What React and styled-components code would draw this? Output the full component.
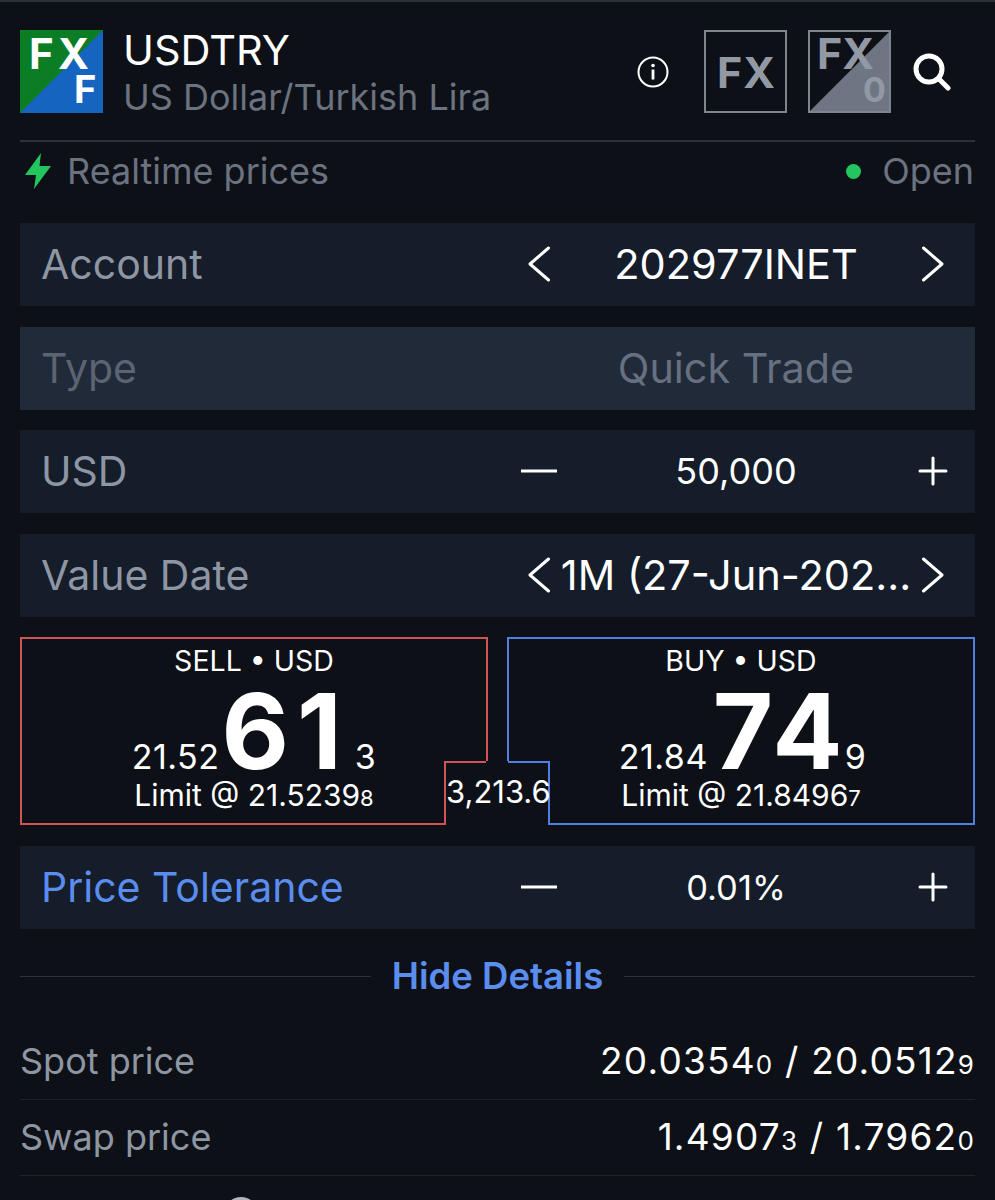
import React from "react";
import styled, { createGlobalStyle } from "styled-components";

const Global = createGlobalStyle`
  html, body { margin: 0; padding: 0; background: #0d1017; height: 1200px; overflow: hidden; }
  * { box-sizing: border-box; }
`;
const Page = styled.div`
  width: 995px; height: 1200px; overflow: hidden; background: #0d1017;
  border-top: 2px solid #2a303c; padding: 28px 20px 0;
  font-family: Inter, "Liberation Sans", sans-serif; color: #fff;
  display: flex; flex-direction: column;
  & > * { flex: none; }
`;
const Header = styled.header`
  display: flex; align-items: center; height: 83px;
`;
const TitleBlock = styled.div`
  margin: 3px 0 0 20px; flex: 1; display: flex; flex-direction: column; gap: 5px;
`;
const Title = styled.div`font-size: 41.5px; line-height: 42px; color: #fff;`;
const Subtitle = styled.div`font-size: 36px; line-height: 42px; color: #6b7280;`;
const Tools = styled.div`display: flex; align-items: center;`;
const InfoWrap = styled.div`margin-right: 35px; display: flex;`;
const SearchWrap = styled.div`margin-left: 22px; margin-right: 24px; display: flex;`;
const MarketBadge = styled.svg`margin-left: ${p => p.$gap || 0}px; display: block;`;
const Divider = styled.div`height: 2px; background: #2a303c; margin-top: 27px;`;
const StatusRow = styled.div`
  display: flex; align-items: center; justify-content: space-between; height: 58px;
`;
const StatusLeft = styled.div`display: flex; align-items: center; gap: 16px; font-size: 36px; color: #6b7280; margin-left: 5px;`;
const StatusRight = styled.div`display: flex; align-items: center; gap: 21px; font-size: 36px; color: #6b7280; margin-right: 1px;`;
const Dot = styled.span`width: 15px; height: 15px; border-radius: 50%; background: #22c55e;`;
const Rows = styled.div`display: flex; flex-direction: column; gap: 20.7px; margin-top: 23px;`;
const Row = styled.div`
  height: 83px; background: ${p => p.$disabled ? "#212a38" : "#151c2a"};
  display: grid; grid-template-columns: 468px 60px minmax(0, 1fr) 60px 12px; align-items: center;
  padding: 0 0 1px 21px;
`;
const RowLabel = styled.div`
  font-size: 41px; color: ${p => p.$accent ? "#5b8def" : p.$disabled ? "#5a6472" : "#8f96a3"}; white-space: nowrap;
`;
const RowValue = styled.div`
  font-size: ${p => p.$size || 36}px; display: flex; justify-content: center; white-space: nowrap;
  color: ${p => p.$disabled ? "#667080" : "#fff"};
`;
const Stepper = styled.div`display: flex; justify-content: center; align-items: center; position: relative; z-index: 1;`;
const SpanValue = styled(RowValue)`grid-column: 2 / 5;`;
const Trade = styled.div`
  position: relative; display: grid; grid-template-columns: 468px 468px; justify-content: space-between;
  height: 188px; margin-top: 20px; margin-bottom: 21px;
`;
const TradeCard = styled.div`
  border: 2px solid ${p => p.$color}; display: flex; flex-direction: column; align-items: center;
  padding-top: 6px;
`;
const CardTitle = styled.div`font-size: 28.5px; line-height: 32px;`;
const PriceLine = styled.div`
  display: flex; align-items: baseline; height: 102px; padding-top: 6px; margin-left: ${p => p.$shift || 0}px;
`;
const Small = styled.span`font-size: 34px; line-height: 1; letter-spacing: 0.5px;`;
const Big = styled.span`font-size: 104px; line-height: 96px; font-weight: 700; letter-spacing: ${p => p.$ls}px; margin: 0 ${p => p.$mr}px 0 ${p => p.$ml}px;`;
const LimitLine = styled.div`font-size: 30px; line-height: 32px;`;
const Tiny = styled.span`font-size: ${p => p.$size || 22}px;`;
const Spread = styled.div`
  position: absolute; left: 424px; top: 124px; width: 106px; height: 64px; background: #0d1017;
  border-left: 2px solid #cf5454; border-right: 2px solid #4f7fe0;
  font-size: 31px; text-align: center; line-height: 62px; white-space: nowrap;
  &::before, &::after { content: ""; position: absolute; top: 0; height: 2px; width: 42px; }
  &::before { left: -2px; background: #cf5454; }
  &::after { right: -2px; background: #4f7fe0; }
`;
const DetailsHead = styled.div`
  display: flex; align-items: center; gap: 21px; margin-top: 21px; height: 52px;
  &::before, &::after { content: ""; flex: 1; height: 1px; background: #2a303c; }
`;
const HideLink = styled.div`font-size: 36.5px; font-weight: 600; color: #5b8def;`;
const Details = styled.div`display: flex; flex-direction: column; margin-top: 22px;`;
const DetailRow = styled.div`
  display: flex; justify-content: space-between; align-items: center; height: 76px; padding-bottom: 2px;
  border-bottom: 1px solid #1c2230; flex: none;
`;
const DetailLabel = styled.div`
  font-size: 36px; color: ${p => p.$accent ? "#5b8def" : "#8f96a3"}; display: flex; align-items: center; gap: 24px;
  margin-top: ${p => p.$lower || 0}px;
`;
const DetailValue = styled.div`
  font-size: 37px; color: #fff; letter-spacing: 1.2px; margin-top: ${p => p.$lower || 0}px;
`;
const Hint = styled.span`
  width: 34px; height: 34px; border-radius: 50%; background: #b0b4bc; display: inline-block; margin-top: -8px;
`;

const Chevron = ({ dir }) => (
  <svg width="26" height="36" viewBox="0 0 26 36" fill="none" stroke="#fff" strokeWidth="3" strokeLinecap="round" strokeLinejoin="round">
    {dir === "left" ? <path d="M22.5 2 4 18l18.5 16" /> : <path d="M3.5 2 22 18 3.5 34" />}
  </svg>
);
const Minus = () => <svg width="36" height="4" viewBox="0 0 36 4"><rect width="36" height="3" y="0.5" fill="#fff" /></svg>;
const Plus = () => (
  <svg width="30" height="30" viewBox="0 0 30 30" stroke="#fff" strokeWidth="3" fill="none" strokeLinecap="round"><path d="M15 2v26M2 15h26" /></svg>
);

const Logo = () => (
  <svg width="83" height="83" viewBox="0 0 83 83">
    <rect width="83" height="83" fill="#1565c0" />
    <polygon points="0,0 83,0 0,83" fill="#0a7d25" />
    <text x="9" y="39" fontFamily="Inter, sans-serif" fontWeight="700" fontSize="42" fill="#fff">F</text>
    <text x="38" y="39" fontFamily="Inter, sans-serif" fontWeight="700" fontSize="42" fill="#fff">X</text>
    <text x="54" y="73" fontFamily="Inter, sans-serif" fontWeight="700" fontSize="38" fill="#fff">F</text>
  </svg>
);
const FxBadge = () => (
  <MarketBadge width="83" height="83" viewBox="0 0 83 83">
    <rect x="1" y="1" width="81" height="81" fill="none" stroke="#7f8590" strokeWidth="2" />
    <text x="13" y="58" fontFamily="Inter, sans-serif" fontWeight="700" fontSize="43" letterSpacing="1" fill="#9298a4">FX</text>
  </MarketBadge>
);
const FxoBadge = () => (
  <MarketBadge $gap={21} width="83" height="83" viewBox="0 0 83 83">
    <polygon points="83,0 83,83 0,83" fill="#6f7683" />
    <rect x="1" y="1" width="81" height="81" fill="none" stroke="#7f8590" strokeWidth="2" />
    <text x="9" y="39" fontFamily="Inter, sans-serif" fontWeight="700" fontSize="43" fill="#9298a4">FX</text>
    <text x="55" y="72" fontFamily="Inter, sans-serif" fontWeight="700" fontSize="34" fill="#9298a4">0</text>
  </MarketBadge>
);
const Info = () => (
  <svg width="32" height="32" viewBox="0 0 32 32" fill="none">
    <circle cx="16" cy="16" r="14.5" stroke="#fff" strokeWidth="2" />
    <circle cx="16" cy="9.5" r="1.8" fill="#fff" />
    <rect x="14.6" y="13.5" width="2.8" height="10" fill="#fff" />
  </svg>
);
const Search = () => (
  <svg width="38" height="38" viewBox="0 0 38 38" fill="none" stroke="#fff" strokeWidth="5" strokeLinecap="round">
    <circle cx="16" cy="16" r="13" />
    <path d="M26 26l9 9" />
  </svg>
);
const Bolt = () => (
  <svg width="26" height="36" viewBox="0 0 26 36">
    <path d="M16 0 0 22h11L9 36 26 13H14.5z" fill="#22c55e" />
  </svg>
);

export default function App() {
  return (
    <Page>
      <Global />
      <Header>
        <Logo />
        <TitleBlock>
          <Title>USDTRY</Title>
          <Subtitle>US Dollar/Turkish Lira</Subtitle>
        </TitleBlock>
        <Tools>
          <InfoWrap><Info /></InfoWrap>
          <FxBadge />
          <FxoBadge />
          <SearchWrap><Search /></SearchWrap>
        </Tools>
      </Header>
      <Divider />
      <StatusRow>
        <StatusLeft><Bolt />Realtime prices</StatusLeft>
        <StatusRight><Dot />Open</StatusRight>
      </StatusRow>
      <Rows>
        <Row>
          <RowLabel>Account</RowLabel>
          <Stepper><Chevron dir="left" /></Stepper>
          <RowValue $size={41.5}>202977INET</RowValue>
          <Stepper><Chevron dir="right" /></Stepper>
        </Row>
        <Row $disabled>
          <RowLabel $disabled>Type</RowLabel>
          <SpanValue $disabled $size={41.3}>Quick Trade</SpanValue>
        </Row>
        <Row>
          <RowLabel>USD</RowLabel>
          <Stepper><Minus /></Stepper>
          <RowValue>50,000</RowValue>
          <Stepper><Plus /></Stepper>
        </Row>
        <Row>
          <RowLabel>Value Date</RowLabel>
          <Stepper><Chevron dir="left" /></Stepper>
          <RowValue $size={41.5}>1M (27-Jun-202...</RowValue>
          <Stepper><Chevron dir="right" /></Stepper>
        </Row>
      </Rows>
      <Trade>
        <TradeCard $color="#cf5454">
          <CardTitle>SELL • USD</CardTitle>
          <PriceLine>
            <Small>21.52</Small><Big $ls={8} $ml={2} $mr={5}>61</Big><Small>3</Small>
          </PriceLine>
          <LimitLine>Limit @ 21.5239<Tiny>8</Tiny></LimitLine>
        </TradeCard>
        <TradeCard $color="#4f7fe0">
          <CardTitle>BUY • USD</CardTitle>
          <PriceLine $shift={3}>
            <Small>21.84</Small><Big $ls={5} $ml={5} $mr={-3}>74</Big><Small>9</Small>
          </PriceLine>
          <LimitLine>Limit @ 21.8496<Tiny>7</Tiny></LimitLine>
        </TradeCard>
        <Spread>3,213.6</Spread>
      </Trade>
      <Row>
        <RowLabel $accent>Price Tolerance</RowLabel>
        <Stepper><Minus /></Stepper>
        <RowValue $size={34.5}>0.01%</RowValue>
        <Stepper><Plus /></Stepper>
      </Row>
      <DetailsHead><HideLink>Hide Details</HideLink></DetailsHead>
      <Details>
        <DetailRow>
          <DetailLabel>Spot price</DetailLabel>
          <DetailValue>20.0354<Tiny $size={26}>0</Tiny> / 20.0512<Tiny $size={26}>9</Tiny></DetailValue>
        </DetailRow>
        <DetailRow>
          <DetailLabel>Swap price</DetailLabel>
          <DetailValue>1.4907<Tiny $size={26}>3</Tiny> / 1.7962<Tiny $size={26}>0</Tiny></DetailValue>
        </DetailRow>
        <DetailRow>
          <DetailLabel $accent $lower={10}>Total Price<Hint /></DetailLabel>
          <DetailValue $lower={10}>1,076,150 / 1,092,450</DetailValue>
        </DetailRow>
      </Details>
    </Page>
  );
}
